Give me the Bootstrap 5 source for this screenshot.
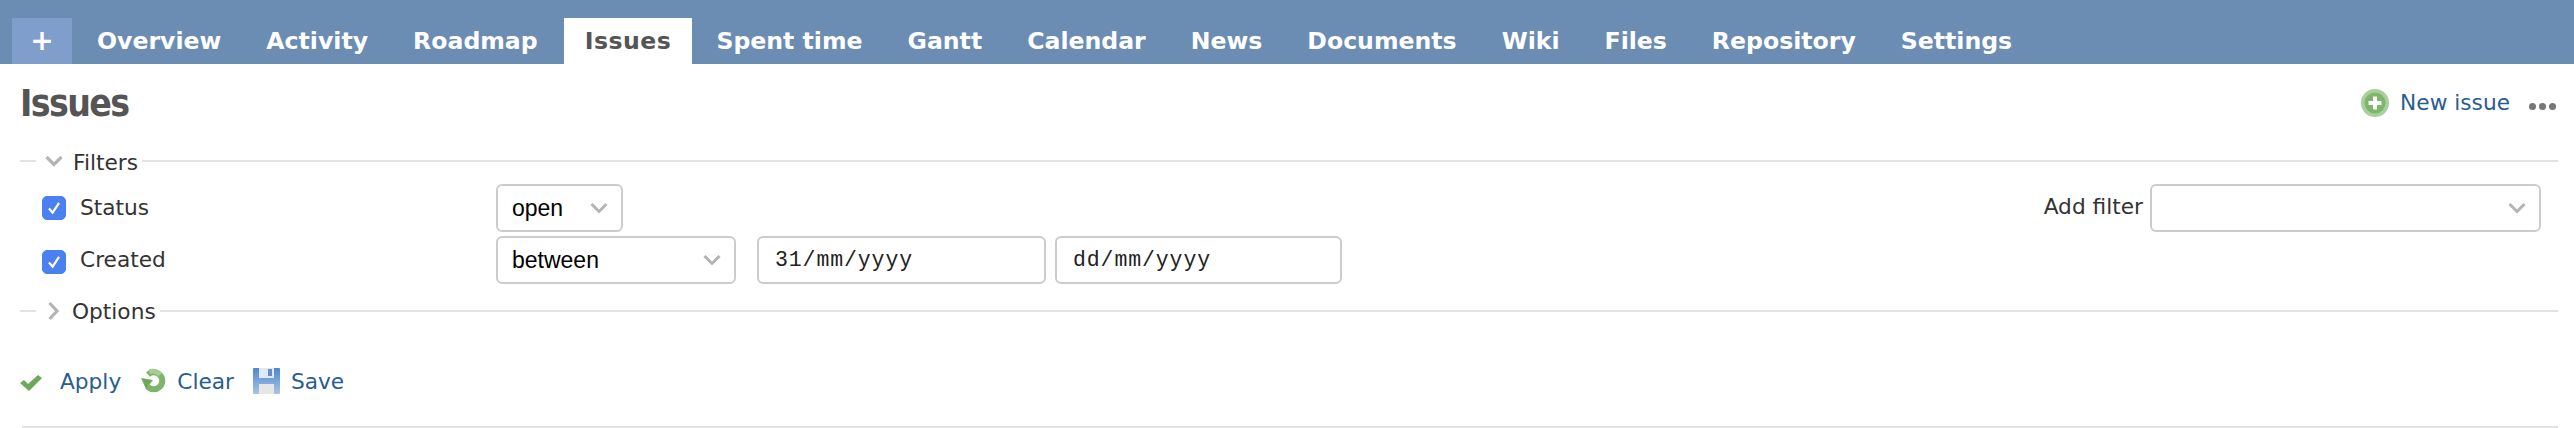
<!DOCTYPE html>
<html lang="en">
<head>
<meta charset="utf-8">
<title>Issues</title>
<link rel="stylesheet" href="https://cdn.jsdelivr.net/npm/bootstrap@5.3.0/dist/css/bootstrap.min.css">
<style>
body{font-family:"DejaVu Sans",Verdana,sans-serif;font-size:21.7px;color:#333;background:#fff;overflow:hidden}
.topbar{background:#6b8cb3;height:64px;padding:18px 0 0 12px}
.topbar .nav{gap:3px;flex-wrap:nowrap}
.topbar .nav-link{height:46px;padding:0 21px;line-height:46px;color:#fff;font-weight:700;font-size:23.6px;white-space:nowrap;border-radius:0}
.topbar .nav-link.active{background:#fff;color:#555;letter-spacing:.5px;margin-left:2px}
.topbar .nav-link.plus{background:#7f9ecb;width:60px;padding:0;text-align:center;margin-right:1px;font-size:28px}
.pagewrap{padding:0 16px 0 20px}
.titlerow{height:78px;padding-top:21px;align-items:flex-start}
.pagetitle{font-family:"DejaVu Sans Condensed","DejaVu Sans",sans-serif;font-size:37px;font-weight:700;line-height:38px;margin:0;color:#555;letter-spacing:-1.6px}
.lnk{color:#2a5d90;text-decoration:none;white-space:nowrap}
.legendrow{height:38px}
.dash{width:16px;height:2px;background:#e2e2e2;flex:none}
.rule{height:2px;background:#e2e2e2;flex:1}
.lgd{color:#333;margin:0 4px 0 10px;line-height:38px;padding-top:2px}
.lgd.lower{padding-top:4px}
.chev{flex:none}
.filterarea{margin-top:4px;padding:0 17px 0 22px}
.rowline{height:48px;margin-bottom:4px}
.lblcol{width:454px;flex:none;gap:14px;padding-bottom:4px}
.raised{margin-bottom:3px}
.form-check-input.box{width:24px;height:24px;margin:0;border-radius:5px;background-color:#4a80ef;border-color:#4a80ef;flex:none;background-size:100%;background-image:url("data:image/svg+xml,%3csvg xmlns='http://www.w3.org/2000/svg' viewBox='0 0 24 24'%3e%3cpath fill='none' stroke='%23fff' stroke-width='2.4' d='M6.5 12.5l4 4.5 7-10.5'/%3e%3c/svg%3e")}
.form-select.sel{height:48px;font-family:"Liberation Sans",sans-serif;font-size:23px;color:#000;border:2px solid #ccc;border-radius:6px;padding:0 14px;background-image:none;background-color:#fff}
.selwrap{position:relative;display:block}
.selwrap .arrow{position:absolute;right:15px;top:18px;pointer-events:none}
.form-control.dateinp{height:48px;font-family:"Liberation Mono",monospace;font-size:21.5px;color:#222;border:2px solid #ccc;border-radius:6px;padding:0 16px;letter-spacing:.9px}
.addlbl{margin-right:7px;white-space:nowrap}
.actions{margin-top:32px;height:40px}
.endrule{height:2px;background:#e2e2e2;margin:24px 0 0 2px}
.dots{gap:3px}
.dots i{display:block;width:7px;height:7px;border-radius:50%;background:#777}
.soft{filter:blur(.5px)}
</style>
</head>
<body>
<div class="topbar">
  <ul class="nav">
    <li class="nav-item"><a class="nav-link plus" href="#">+</a></li>
    <li class="nav-item"><a class="nav-link" href="#">Overview</a></li>
    <li class="nav-item"><a class="nav-link" href="#">Activity</a></li>
    <li class="nav-item"><a class="nav-link" href="#">Roadmap</a></li>
    <li class="nav-item"><a class="nav-link active" href="#">Issues</a></li>
    <li class="nav-item"><a class="nav-link" href="#">Spent time</a></li>
    <li class="nav-item"><a class="nav-link" href="#">Gantt</a></li>
    <li class="nav-item"><a class="nav-link" href="#">Calendar</a></li>
    <li class="nav-item"><a class="nav-link" href="#">News</a></li>
    <li class="nav-item"><a class="nav-link" href="#">Documents</a></li>
    <li class="nav-item"><a class="nav-link" href="#">Wiki</a></li>
    <li class="nav-item"><a class="nav-link" href="#">Files</a></li>
    <li class="nav-item"><a class="nav-link" href="#">Repository</a></li>
    <li class="nav-item"><a class="nav-link" href="#">Settings</a></li>
  </ul>
</div>
<div class="pagewrap">
  <div class="d-flex justify-content-between titlerow">
    <h2 class="pagetitle">Issues</h2>
    <div class="d-flex align-items-center" style="height:36px">
      <a class="lnk d-flex align-items-center" href="#">
        <svg class="soft" width="30" height="30" viewBox="0 0 30 30"><circle cx="15" cy="15" r="14" fill="#a9cf9c"/><circle cx="15" cy="15" r="10.5" fill="#7fb56c"/><path d="M15 8.5v13M8.5 15h13" stroke="#fff" stroke-width="4"/></svg>
        <span style="margin-left:10px">New issue</span>
      </a>
      <div class="d-flex dots" style="margin:6px 2px 0 19px"><i></i><i></i><i></i></div>
    </div>
  </div>

  <div class="d-flex align-items-center legendrow">
    <span class="dash"></span>
    <svg class="chev" style="margin-left:9px" width="18" height="12" viewBox="0 0 18 12"><path d="M1.5 2L9 9.5 16.5 2" fill="none" stroke="#b4b4b4" stroke-width="3.2"/></svg>
    <span class="lgd lower">Filters</span>
    <span class="rule"></span>
  </div>

  <div class="d-flex justify-content-between filterarea">
    <div>
      <div class="d-flex align-items-start rowline">
        <label class="d-flex align-items-center lblcol pt-2"><input class="form-check-input box" type="checkbox" checked>Status</label>
        <span class="selwrap"><select class="form-select sel" style="width:127px"><option>open</option></select><svg class="arrow" width="18" height="12" viewBox="0 0 18 12"><path d="M1.5 2L9 9.5 16.5 2" fill="none" stroke="#b4b4b4" stroke-width="3"/></svg></span>
      </div>
      <div class="d-flex align-items-start rowline">
        <label class="d-flex align-items-center lblcol pt-2"><input class="form-check-input box" type="checkbox" checked><span class="raised">Created</span></label>
        <span class="selwrap"><select class="form-select sel" style="width:240px"><option>between</option></select><svg class="arrow" width="18" height="12" viewBox="0 0 18 12"><path d="M1.5 2L9 9.5 16.5 2" fill="none" stroke="#b4b4b4" stroke-width="3"/></svg></span>
        <input class="form-control dateinp" style="width:289px;margin-left:21px" type="text" value="31/mm/yyyy">
        <input class="form-control dateinp" style="width:287px;margin-left:9px" type="text" value="dd/mm/yyyy">
      </div>
    </div>
    <div class="d-flex align-items-start">
      <label class="addlbl" style="padding-top:7px">Add filter</label>
      <span class="selwrap"><select class="form-select sel" style="width:391px"><option></option></select><svg class="arrow" width="18" height="12" viewBox="0 0 18 12"><path d="M1.5 2L9 9.5 16.5 2" fill="none" stroke="#b4b4b4" stroke-width="3"/></svg></span>
    </div>
  </div>

  <div class="d-flex align-items-center legendrow" style="margin-top:4px">
    <span class="dash"></span>
    <svg class="chev" style="margin-left:11px" width="13" height="20" viewBox="0 0 13 20"><path d="M2.5 2l7.5 8-7.5 8" fill="none" stroke="#b4b4b4" stroke-width="3.2"/></svg>
    <span class="lgd" style="margin-left:12px">Options</span>
    <span class="rule"></span>
  </div>

  <div class="d-flex align-items-center actions">
    <a class="lnk d-flex align-items-center" href="#">
      <svg class="soft" width="22" height="20" viewBox="0 0 22 20"><path d="M0 11l4-3 4 4 10-9 4 3L9 19z" fill="#6fa85c"/></svg>
      <span style="margin-left:18px">Apply</span>
    </a>
    <a class="lnk d-flex align-items-center" style="margin-left:19px" href="#">
      <svg class="soft" width="26" height="27" viewBox="0 0 26 27"><path d="M8 6.5A8.5 8.5 0 1 1 7.5 18.5" fill="none" stroke="#7db56b" stroke-width="6"/><path d="M1 10l12 2-7 9z" fill="#6fa85c"/><path d="M9 1.5a12 12 0 0 1 13 4l-4 2.5a8 8 0 0 0-8-2z" fill="#a5d094"/></svg>
      <span style="margin-left:11px">Clear</span>
    </a>
    <a class="lnk d-flex align-items-center" style="margin-left:19px" href="#">
      <svg class="soft" width="27" height="27" viewBox="0 0 27 27"><defs><linearGradient id="fl" x1="0" y1="0" x2="0" y2="1"><stop offset="0" stop-color="#4f86cc"/><stop offset="1" stop-color="#a9c4e6"/></linearGradient></defs><rect width="27" height="26" rx="1" fill="url(#fl)"/><rect x="6" width="15" height="10" fill="#dfe9f5"/><rect x="15" y="1" width="4" height="7" fill="#5f8fcc"/><rect x="6" y="16" width="15" height="10" fill="#e6e6e6"/></svg>
      <span style="margin-left:11px">Save</span>
    </a>
  </div>
  <div class="endrule"></div>
</div>
<script src="https://cdn.jsdelivr.net/npm/bootstrap@5.3.0/dist/js/bootstrap.bundle.min.js"></script>
</body>
</html>
